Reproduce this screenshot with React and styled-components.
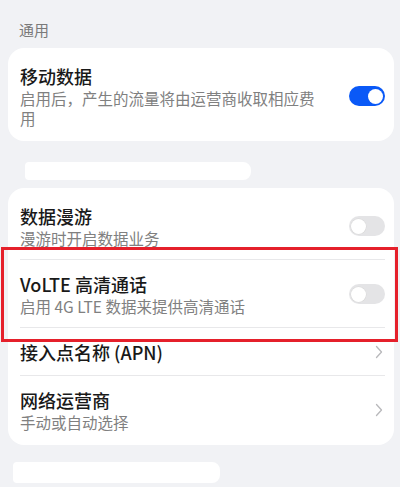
import React from "react";
import styled, { createGlobalStyle } from "styled-components";

const Global = createGlobalStyle`
  html, body { margin: 0; padding: 0; background: #f1f2f5; }
  body { font-family: "Noto Sans CJK SC", "Noto Sans", sans-serif; -webkit-font-smoothing: antialiased; }
`;

const Page = styled.div`
  width: 400px;
  height: 487px;
  overflow: hidden;
  background: #f1f2f5;
  padding: 20px 6px 0 8px;
  box-sizing: border-box;
`;

const SectionLabel = styled.div`
  font-size: 15px;
  line-height: 20px;
  color: #7a7a7a;
  padding-left: 11px;
  margin-bottom: 8px;
`;

const Card = styled.div`
  position: relative;
  background: #ffffff;
  border-radius: 16px;
  padding: 4px 9px 2px 12px;
`;

const Row = styled.div`
  position: relative;
  display: flex;
  align-items: center;
  gap: 12px;
  padding: 12px 0 11px;
  border-top: ${(p) => (p.$divider ? "1px solid #e8e8ea" : "none")};
`;

const Texts = styled.div`
  flex: 1;
  min-width: 0;
`;

const Title = styled.div`
  font-size: 18px;
  line-height: 24px;
  font-weight: 500;
  color: #191919;
`;

const Subtitle = styled.div`
  font-size: 15.5px;
  line-height: 20px;
  color: #808080;
  padding-right: 20px;
`;

const Track = styled.div`
  position: relative;
  flex: none;
  width: 36px;
  height: 20px;
  border-radius: 10px;
  background: ${(p) => (p.$on ? "#0a59f7" : "#e4e4e6")};
`;

const Knob = styled.div`
  position: absolute;
  top: 2.5px;
  ${(p) => (p.$on ? "right: 2.5px;" : "left: 2px;")}
  width: 15px;
  height: 15px;
  border-radius: 50%;
  background: #ffffff;
  box-shadow: ${(p) => (p.$on ? "none" : "0 0 0 0.5px #d8d8d8")};
`;

const Chevron = styled.svg`
  flex: none;
  width: 8px;
  height: 14px;
  margin-right: 2px;
`;

const Smudge = styled.div`
  height: ${(p) => p.$h}px;
  width: ${(p) => p.$w}px;
  margin: ${(p) => p.$m};
  background: #ffffff;
  border-radius: 4px 8px 8px 4px;
  filter: blur(0.6px);
`;

const Highlight = styled.div`
  position: absolute;
  top: -13px;
  bottom: -15px;
  left: -19px;
  right: -13px;
  border: 3px solid #e5202b;
  pointer-events: none;
`;

const Toggle = ({ on }) => (
  <Track $on={on}>
    <Knob $on={on} />
  </Track>
);

const Arrow = () => (
  <Chevron viewBox="0 0 8 14">
    <path d="M1.5 1.5 L6.5 7 L1.5 12.5" fill="none" stroke="#b8b8bb" strokeWidth="1.3" strokeLinecap="round" strokeLinejoin="round" />
  </Chevron>
);

export default function App() {
  return (
    <>
      <Global />
      <Page>
        <SectionLabel>通用</SectionLabel>
        <Card>
          <Row>
            <Texts>
              <Title>移动数据</Title>
              <Subtitle>启用后，产生的流量将由运营商收取相应费用</Subtitle>
            </Texts>
            <Toggle on />
          </Row>
        </Card>
        <Smudge $w={226} $h={18} $m="21px 0 8px 17px" />
        <Card>
          <Row>
            <Texts>
              <Title>数据漫游</Title>
              <Subtitle>漫游时开启数据业务</Subtitle>
            </Texts>
            <Toggle />
          </Row>
          <Row $divider>
            <Texts>
              <Title>VoLTE 高清通话</Title>
              <Subtitle>启用 4G LTE 数据来提供高清通话</Subtitle>
            </Texts>
            <Toggle />
            <Highlight />
          </Row>
          <Row $divider>
            <Texts>
              <Title>接入点名称 (APN)</Title>
            </Texts>
            <Arrow />
          </Row>
          <Row $divider>
            <Texts>
              <Title>网络运营商</Title>
              <Subtitle>手动或自动选择</Subtitle>
            </Texts>
            <Arrow />
          </Row>
        </Card>
        <Smudge $w={207} $h={21} $m="17px 0 0 5px" />
      </Page>
    </>
  );
}
